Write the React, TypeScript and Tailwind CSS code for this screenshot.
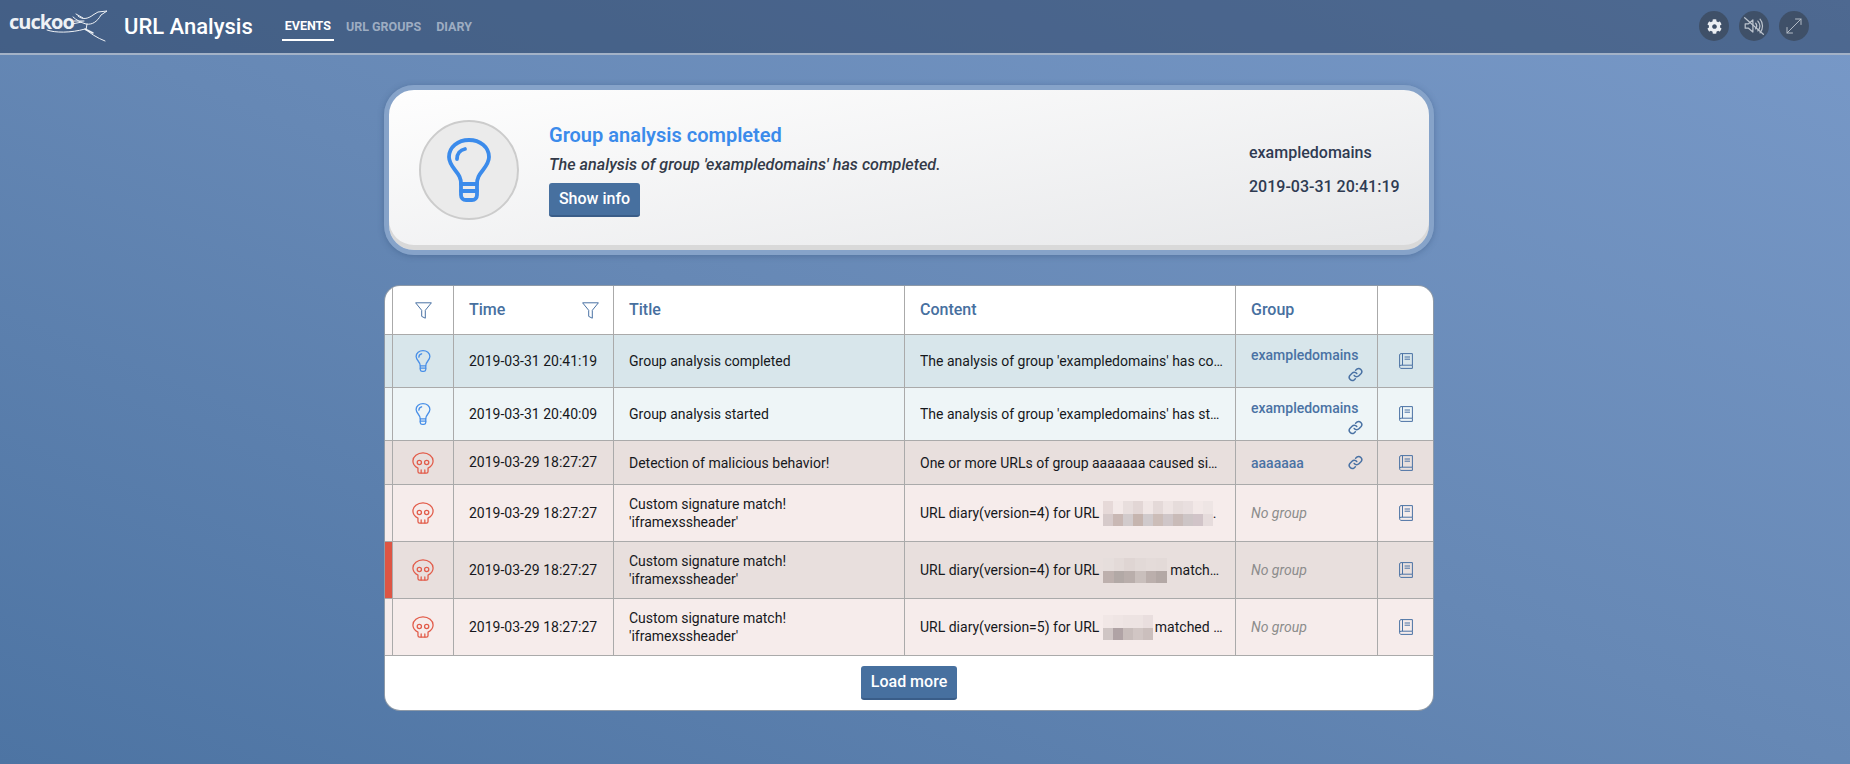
import { FaCog } from "react-icons/fa";

type Row = {
  kind: "info" | "danger";
  time: string;
  title: string[];
  content: React.ReactNode;
  group?: string;
  linkBelow?: boolean;
  rowClass: string;
  rowHeight: string;
  marked?: boolean;
};

function Bulb({ className }: { className: string }) {
  return (
    <svg className={className} viewBox="0 0 44 64" fill="none" stroke="currentColor" strokeWidth={3.8} strokeLinecap="round" strokeLinejoin="round">
      <path d="M14 46c0-6-2-9-6-14C4.500 27.500 2 24 2 19 2 9 11 2 22 2s20 7 20 17c0 5-2.500 8.500-6 13-4 5-6 8-6 14z" />
      <path d="M10 21c0-5 3-9 8-10" />
      <path d="M14 46v11c0 3 2 5 5 5h6c3 0 5-2 5-5V46" />
      <path d="M14 53h16" />
    </svg>
  );
}

function Skull({ className }: { className: string }) {
  return (
    <svg className={className} viewBox="0 0 24 24" fill="none" stroke="currentColor" strokeWidth={1.4} strokeLinecap="round" strokeLinejoin="round">
      <path d="M6.500 21.200v-3.600C3 15.800 1 13 1 9.800 1 5 6 1 12 1s11 4 11 8.800c0 3.200-2 6-5.500 7.800v3.600c0 1-.7 1.800-1.800 1.800H8.300c-1.100 0-1.800-.8-1.800-1.800z" />
      <circle cx="8" cy="11.500" r="2.300" />
      <circle cx="16" cy="11.500" r="2.300" />
      <path d="M10 22.800v-3.300M14 22.800v-3.300" />
    </svg>
  );
}

function FunnelIcon() {
  return (
    <svg className="w-[17px] h-[17px] text-[#4a72a4]" viewBox="0 0 17 17" fill="none" stroke="currentColor" strokeWidth={1} strokeLinejoin="round">
      <path d="M.6.8h15.800L10.300 8.300v7.900l-3.600-1.800V8.300z" />
    </svg>
  );
}

function LinkIcon() {
  return (
    <svg className="w-[15px] h-[15px] text-[#4a72a4]" viewBox="0 0 24 24" fill="none" stroke="currentColor" strokeWidth={2.4} strokeLinecap="round" strokeLinejoin="round">
      <path d="M10 13.500a5 5 0 0 0 7.500.5l3.500-3.500a5 5 0 0 0-7-7L12.200 5.200" />
      <path d="M14 10.500a5 5 0 0 0-7.500-.5L3 13.500a5 5 0 0 0 7 7l1.800-1.700" />
    </svg>
  );
}

function BookIcon() {
  return (
    <svg className="w-[14px] h-[16px] text-[#4a72a4]" viewBox="0 0 14 16" fill="none" stroke="currentColor" strokeWidth={1}>
      <path d="M.6 13.400V2C.6 1.200 1.200.6 2 .6h11.400v11.600H2c-.9 0-1.400.5-1.400 1.300S1.100 15.400 2 15.400h11.400v-3.200" />
      <path d="M3.500.6v11.600M5.600 4h5.400M5.600 6.200h5.400" />
    </svg>
  );
}

function CuckooLogo() {
  return (
    <div className="relative w-[111px] h-[53px] shrink-0">
      <span className="absolute left-[9px] top-[9px] font-['Open_Sans',sans-serif] font-bold text-[20px] tracking-[-1px] leading-[26px] text-[#eef1f5]">cuckoo</span>
      <svg className="absolute left-0 top-0 w-[111px] h-[53px] text-[#eef1f5]" viewBox="0 0 111 53" fill="none" stroke="currentColor" strokeWidth={1} strokeLinecap="round" strokeLinejoin="round">
        <path d="M47 30c8 3 24 3 38-1 5 4 12 9 20 12" />
        <path d="M85 29l8 4" strokeWidth={1.4} />
        <path d="M78 16c4 4 10 3 15-1l5-3 9-1-6 4c-4 7-9 10-15 9-4-1-10-4-13-7" />
        <path d="M74 21l10 0M76 14l7 4M72 24l10-2" />
        <path d="M87 24l-1 6" />
      </svg>
    </div>
  );
}

function Blur({ width, top, bottom }: { width: string; top: string[]; bottom: string[] }) {
  return (
    <span className={`inline-flex flex-col align-middle h-[26px] ${width}`}>
      <span className="flex flex-1">
        {top.map((c, i) => (
          <span key={i} className={`flex-1 ${c}`} />
        ))}
      </span>
      <span className="flex flex-1">
        {bottom.map((c, i) => (
          <span key={i} className={`flex-1 ${c}`} />
        ))}
      </span>
    </span>
  );
}

const rows: Row[] = [
  {
    kind: "info",
    time: "2019-03-31 20:41:19",
    title: ["Group analysis completed"],
    content: "The analysis of group 'exampledomains' has completed.",
    group: "exampledomains",
    linkBelow: true,
    rowClass: "bg-[#d8e6eb]",
    rowHeight: "h-[53px]",
  },
  {
    kind: "info",
    time: "2019-03-31 20:40:09",
    title: ["Group analysis started"],
    content: "The analysis of group 'exampledomains' has started.",
    group: "exampledomains",
    linkBelow: true,
    rowClass: "bg-[#eef5f7]",
    rowHeight: "h-[53px]",
  },
  {
    kind: "danger",
    time: "2019-03-29 18:27:27",
    title: ["Detection of malicious behavior!"],
    content: "One or more URLs of group aaaaaaa caused signature matches.",
    group: "aaaaaaa",
    rowClass: "bg-[#e8dfdd]",
    rowHeight: "h-[44px]",
  },
  {
    kind: "danger",
    time: "2019-03-29 18:27:27",
    title: ["Custom signature match!", "'iframexssheader'"],
    content: (
      <>
        URL diary(version=4) for URL{" "}
        <Blur
          width="w-[110px]"
          top={["bg-[#e6d9d8]", "bg-[#f3e9e8]", "bg-[#e8dedd]", "bg-[#e2d6d5]", "bg-[#f0e6e5]", "bg-[#e4d9d8]", "bg-[#eee4e3]", "bg-[#e6dcdb]", "bg-[#e9dfdf]", "bg-[#f2e8e7]", "bg-[#eee5e4]"]}
          bottom={["bg-[#d6caca]", "bg-[#c9b8b4]", "bg-[#d2cbcc]", "bg-[#c6b5af]", "bg-[#d0cacc]", "bg-[#ccbdb8]", "bg-[#cfc6c8]", "bg-[#c9bbb8]", "bg-[#cdc5c6]", "bg-[#d1c4c8]", "bg-[#e6dcdc]"]}
        />
        .
      </>
    ),
    rowClass: "bg-[#f6eceb]",
    rowHeight: "h-[57px]",
  },
  {
    kind: "danger",
    time: "2019-03-29 18:27:27",
    title: ["Custom signature match!", "'iframexssheader'"],
    content: (
      <>
        URL diary(version=4) for URL{" "}
        <Blur
          width="w-[64px]"
          top={["bg-[#e6dedc]", "bg-[#e3dad8]", "bg-[#dfd5d3]", "bg-[#e2d9d7]", "bg-[#e4dbd9]", "bg-[#e3dad8]"]}
          bottom={["bg-[#bdb0ad]", "bg-[#b2a9a6]", "bg-[#b9aeab]", "bg-[#c9bfbc]", "bg-[#bbafac]", "bg-[#b3a8a5]"]}
        />{" "}
        matched signature 'iframexssheader'.
      </>
    ),
    rowClass: "bg-[#e8dfdd]",
    rowHeight: "h-[57px]",
    marked: true,
  },
  {
    kind: "danger",
    time: "2019-03-29 18:27:27",
    title: ["Custom signature match!", "'iframexssheader'"],
    content: (
      <>
        URL diary(version=5) for URL{" "}
        <Blur
          width="w-[50px]"
          top={["bg-[#f1e7e6]", "bg-[#efe5e4]", "bg-[#ede3e2]", "bg-[#ede3e2]", "bg-[#e9dede]"]}
          bottom={["bg-[#cfc5c4]", "bg-[#b0a3a5]", "bg-[#c8bdbb]", "bg-[#d1c6c4]", "bg-[#cbbfbd]"]}
        />
        <span className="ml-[2px]">matched signature 'iframexssheader'.</span>
      </>
    ),
    rowClass: "bg-[#f6eceb]",
    rowHeight: "h-[57px]",
  },
];

const cell = "border-b border-r border-[#aaaaaa] align-middle";

export default function App() {
  return (
    <div className="min-h-screen w-full font-['Roboto',sans-serif] bg-gradient-to-tr from-[#4d74a3] via-[#6688b5] to-[#7899c8] overflow-hidden">
      {/* Top bar */}
      <header className="h-[55px] border-b-2 border-[#a3b2c7] bg-[#1a2e4d]/45 flex items-center pr-[41px]">
        <CuckooLogo />
        <h1 className="ml-[13px] text-[22px] font-medium text-white leading-none">URL Analysis</h1>
        <nav className="ml-[29px] flex items-center gap-[9px] self-stretch pt-[2px] text-[12.500px] font-bold">
          <a className="h-[26px] px-[3px] flex items-center border-b-2 border-white text-white">EVENTS</a>
          <a className="h-[26px] px-[3px] flex items-center text-[#9eadc2]">URL GROUPS</a>
          <a className="h-[26px] px-[3px] flex items-center text-[#9eadc2]">DIARY</a>
        </nav>
        <div className="ml-auto flex gap-[10px] mb-[1px]">
          <button className="w-[30px] h-[30px] rounded-full bg-[#3f5068] flex items-center justify-center text-[#eceff3]">
            <FaCog className="w-[15px] h-[15px]" />
          </button>
          <button className="w-[30px] h-[30px] rounded-full bg-[#3f5068] flex items-center justify-center text-[#bcc4ce]">
            <svg className="w-[22px] h-[22px]" viewBox="0 0 20 20" fill="none" stroke="currentColor" strokeWidth={1.1} strokeLinecap="round" strokeLinejoin="round">
              <path d="M2 8h3l4-3.500v11L5 12H2z" />
              <path d="M11.500 7.500c1.200 1.500 1.200 3.500 0 5M13.500 5.500c2.300 2.700 2.300 6.300 0 9M15.500 3.800c3 3.500 3 9 0 12.400" />
              <path d="M1.500 2.500l17 15" />
            </svg>
          </button>
          <button className="w-[30px] h-[30px] rounded-full bg-[#3f5068] flex items-center justify-center text-[#b4bcc7]">
            <svg className="w-[16px] h-[16px]" viewBox="0 0 16 16" fill="none" stroke="currentColor" strokeWidth={1} strokeLinecap="round" strokeLinejoin="round">
              <path d="M1 15L15 1M9.500 1H15v5.500M1 9.500V15h5.500" />
            </svg>
          </button>
        </div>
      </header>

      <main className="w-[1050px] ml-[384px] pt-[30px]">
        {/* Latest event card */}
        <section className="h-[170px] rounded-[30px] border-[5px] border-[#86a3c9] bg-gradient-to-br from-[#fefefe] to-[#e7e8ea] shadow-[inset_0_-5px_0_#d9d9d9,0_1px_6px_rgba(40,70,110,0.35)] flex items-center pl-[30px] pr-[28px]">
          <div className="w-[100px] h-[100px] rounded-full border-2 border-[#cccccc] bg-[#ebebeb] flex items-center justify-center shrink-0">
            <Bulb className="w-[44px] h-[64px] text-[#3b8beb]" />
          </div>
          <div className="ml-[30px] flex-1 pb-[1px]">
            <h2 className="text-[20px] font-semibold text-[#3b8beb] leading-[24px]">Group analysis completed</h2>
            <p className="mt-[8px] text-[16.150px] font-medium italic text-[#333a48] leading-[20px]">The analysis of group 'exampledomains' has completed.</p>
            <button className="mt-[8px] w-[91px] h-[34px] rounded-[3px] bg-[#47709f] border-b-2 border-[#3a5d88] text-[16px] font-medium text-white flex items-center justify-center">Show info</button>
          </div>
          <div className="w-[152px] whitespace-nowrap text-[16px] font-medium text-[#2f3b52]">
            <p className="leading-[20px]">exampledomains</p>
            <p className="mt-[14px] leading-[20px]">2019-03-31 20:41:19</p>
          </div>
        </section>

        {/* Events table */}
        <section className="mt-[31px] ml-[1px] w-[1048px] h-[424px] rounded-[15px] bg-white overflow-hidden shadow-[0_0_0_1px_#8e9aa8] flex flex-col">
          <table className="w-full table-fixed border-separate border-spacing-0 text-[14px] text-[#16181c]">
            <colgroup>
              <col className="w-[8px]" />
              <col className="w-[61px]" />
              <col className="w-[160px]" />
              <col className="w-[291px]" />
              <col className="w-[331px]" />
              <col className="w-[142px]" />
              <col />
            </colgroup>
            <thead>
              <tr className="h-[49px] text-[16px] text-[#47709f] text-left">
                <th className={cell} />
                <th className={cell}>
                  <div className="flex justify-center">
                    <FunnelIcon />
                  </div>
                </th>
                <th className={`${cell} pl-[15px] pr-[14px] font-medium`}>
                  <div className="flex items-center justify-between">
                    Time
                    <FunnelIcon />
                  </div>
                </th>
                <th className={`${cell} pl-[15px] font-medium`}>Title</th>
                <th className={`${cell} pl-[15px] font-medium`}>Content</th>
                <th className={`${cell} pl-[15px] font-medium`}>Group</th>
                <th className="border-b border-[#aaaaaa]" />
              </tr>
            </thead>
            <tbody>
              {rows.map((r, i) => (
                <tr key={i} className={`${r.rowClass} ${r.rowHeight}`}>
                  <td className={`${cell} ${r.marked ? "bg-[#dd5544]" : ""}`} />
                  <td className={cell}>
                    <div className="flex justify-center">
                      {r.kind === "info" ? <Bulb className="w-[16px] h-[22px] text-[#4a90e8]" /> : <Skull className="w-[22px] h-[22px] text-[#e25c4a]" />}
                    </div>
                  </td>
                  <td className={`${cell} pl-[15px]`}>{r.time}</td>
                  <td className={`${cell} pl-[15px] leading-[18px]`}>
                    {r.title.map((t) => (
                      <div key={t}>{t}</div>
                    ))}
                  </td>
                  <td className={`${cell} pl-[15px] pr-[12px]`}>
                    <div className="truncate h-[26px] leading-[26px]">{r.content}</div>
                  </td>
                  <td className={`${cell} pl-[15px] pr-[14px]`}>
                    {r.group ? (
                      <div className={r.linkBelow ? "pt-[5px]" : "flex items-center justify-between"}>
                        <div className="font-medium text-[14px] text-[#4a72a4] leading-[20px]">{r.group}</div>
                        <div className={r.linkBelow ? "flex justify-end mt-[2px]" : "flex justify-end"}>
                          <LinkIcon />
                        </div>
                      </div>
                    ) : (
                      <span className="italic text-[#8c8c8c]">No group</span>
                    )}
                  </td>
                  <td className="border-b border-[#aaaaaa]">
                    <div className="flex justify-center">
                      <BookIcon />
                    </div>
                  </td>
                </tr>
              ))}
            </tbody>
          </table>
          <div className="flex-1 flex items-center justify-center">
            <button className="w-[96px] h-[34px] rounded-[3px] bg-[#47709f] border-b-2 border-[#3a5d88] text-[16px] font-medium text-white">Load more</button>
          </div>
        </section>
      </main>
    </div>
  );
}
